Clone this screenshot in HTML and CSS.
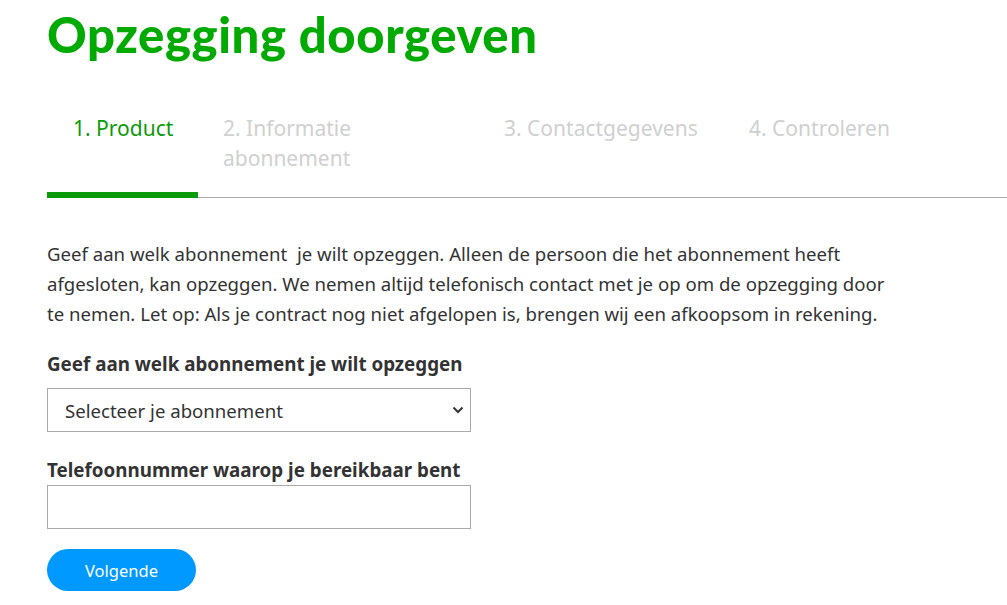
FILE: index.html
```html
<!DOCTYPE html>
<html lang="nl">
<head>
<meta charset="utf-8">
<title>Opzegging doorgeven</title>
<link rel="stylesheet" href="styles.css">
</head>
<body>
<main class="page">
  <h1 class="title">Opzegging doorgeven</h1>
  <nav class="steps">
    <div class="step step-active step-1">1. Product</div>
    <div class="step step-2"><span class="step-label-wrap">2. Informatie abonnement</span></div>
    <div class="step step-3">3. Contactgegevens</div>
    <div class="step step-4">4. Controleren</div>
  </nav>
  <p class="intro">Geef aan welk abonnement &nbsp;je wilt opzeggen. Alleen de persoon die het abonnement heeft<br>afgesloten, kan opzeggen. We nemen altijd telefonisch contact met je op om de opzegging door<br>te nemen. Let op: Als je contract nog niet afgelopen is, brengen wij een afkoopsom in rekening.</p>
  <form class="form">
    <div class="field">
      <label class="label" for="abonnement">Geef aan welk abonnement je wilt opzeggen</label>
      <div class="select-wrap">
        <select id="abonnement" class="control select">
          <option>Selecteer je abonnement</option>
        </select>
        <svg class="chevron" width="12" height="8" viewBox="0 0 12 8"><path d="M1.5 1.5 L6 6 L10.5 1.5" fill="none" stroke="#333" stroke-width="2"/></svg>
      </div>
    </div>
    <div class="field field-phone">
      <label class="label" for="telefoon">Telefoonnummer waarop je bereikbaar bent</label>
      <input id="telefoon" class="control input" type="text">
    </div>
    <button type="button" class="btn">Volgende</button>
  </form>
</main>
</body>
</html>
```
FILE: styles.css
```css
html, body {
  margin: 0;
  padding: 0;
  background: #fff;
}
body {
  font-family: "Noto Sans", "Open Sans", sans-serif;
  color: #333;
}
.page {
  padding: 0 0 0 47px;
}
.title {
  margin: 0;
  padding-top: 4px;
  font-family: "Lato", sans-serif;
  font-weight: 900;
  font-size: 49px;
  line-height: 60px;
  color: #00aa00;
  letter-spacing: 0.6px;
}
.steps {
  display: flex;
  margin-top: 47px;
  border-bottom: 1px solid #aaa;
  font-size: 21px;
  line-height: 30px;
  color: #d0d0d0;
}
.step {
  box-sizing: border-box;
  padding: 2px 25px 0 26px;
  height: 87px;
  border-bottom: 6px solid transparent;
  margin-bottom: -1px;
  white-space: nowrap;
}
.step-1 { width: 151px; }
.step-2 { width: 281px; padding-left: 25px; white-space: normal; }
.step-3 { width: 245px; padding-left: 25px; }
.step-4 { width: 220px; padding-left: 25px; }
.step-label-wrap {
  display: block;
  width: 170px;
}
.step-active {
  color: #0b9a0b;
  border-bottom-color: #0b9a0b;
}
.intro {
  margin: 41px 0 0;
  font-size: 18.6px;
  line-height: 30px;
  color: #333;
  white-space: nowrap;
}
.form {
  margin-top: 20px;
}
.field {
  display: flex;
  flex-direction: column;
}
.label {
  font-weight: 700;
  font-size: 18.8px;
  line-height: 30px;
  color: #333;
  margin-bottom: 9px;
}
.field-phone {
  margin-top: 23px;
}
.field-phone .label {
  margin-bottom: 0;
}
.select-wrap {
  position: relative;
  width: 424px;
}
.control {
  box-sizing: border-box;
  width: 424px;
  height: 44px;
  border: 1px solid #aaa;
  border-radius: 0;
  background: #fff;
  font-family: "Noto Sans", "Open Sans", sans-serif;
  font-size: 18.6px;
  color: #333;
  margin: 0;
}
.select {
  appearance: none;
  -webkit-appearance: none;
  padding: 0 30px 0 17px;
}
.chevron {
  position: absolute;
  right: 7px;
  top: 18px;
}
.input {
  padding: 0 12px;
}
.btn {
  display: block;
  margin-top: 20px;
  width: 149px;
  height: 42px;
  border: 0;
  border-radius: 21px;
  background: #0099ff;
  color: #fff;
  font-family: "Noto Sans", "Open Sans", sans-serif;
  font-size: 16.5px;
  padding: 0;
  cursor: pointer;
}
```
